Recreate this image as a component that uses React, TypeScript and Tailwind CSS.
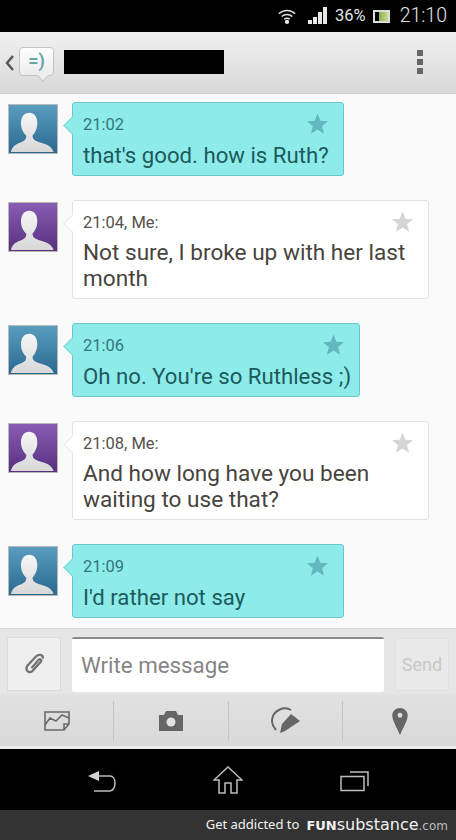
const font = { fontFamily: 'Roboto, "Noto Sans", sans-serif' };

const Avatar = ({ purple }: { purple?: boolean }) => (
  <div
    className={`relative w-[50px] h-[50px] shrink-0 overflow-hidden border border-[#b8b8b8] ${
      purple ? 'bg-gradient-to-b from-[#8a5cb4] to-[#57307f]' : 'bg-gradient-to-b from-[#5a9cc0] to-[#2a6a90]'
    }`}
  >
    <svg viewBox="0 0 50 50" className="absolute inset-0 w-full h-full">
      <defs>
        <linearGradient id="sil" x1="0" y1="0" x2="0" y2="1">
          <stop offset="0" stopColor="#f6f6f6" />
          <stop offset="1" stopColor="#d8d8d8" />
        </linearGradient>
      </defs>
      <path
        d="M2 49c1-5 4-8 10-10 4-1.500 6-3 6-7-3-3-5.500-7-5.500-13C12.500 12 16 8 21 8s8.500 4 8.500 11c0 6-2.500 10-5 13 0 4 3 5.500 8 7 7 2 12 4 14 10z"
        fill="url(#sil)"
      />
    </svg>
  </div>
);

const Star = ({ color, className }: { color: string; className: string }) => (
  <svg viewBox="0 0 24 24" className={`absolute w-[23px] h-[23px] ${className}`}>
    <path d="M12 1.500l3 7.500 8 .6-6.200 5 2 8L12 18.300 5.200 22.600l2-8L1 9.600 9 9z" fill={color} />
  </svg>
);

type Msg = { time: string; lines: string; me?: boolean; w: string };

const messages: Msg[] = [
  { time: '21:02', lines: "that's good. how is Ruth?", w: 'w-[272px]' },
  { time: '21:04, Me:', lines: 'Not sure, I broke up with her last month', me: true, w: 'w-[357px]' },
  { time: '21:06', lines: "Oh no. You're so Ruthless ;)", w: 'w-[288px]' },
  { time: '21:08, Me:', lines: 'And how long have you been waiting to use that?', me: true, w: 'w-[357px]' },
  { time: '21:09', lines: "I'd rather not say", w: 'w-[272px]' },
];

const Bubble = ({ m }: { m: Msg }) => (
  <div className="flex items-start pl-2">
    <div className="pt-[2px]">
      <Avatar purple={m.me} />
    </div>
    <div
      className={`relative ml-[14px] ${m.w} min-h-[74px] rounded-[3px] border pl-[10px] pt-[10px] pb-[6px] ${
        m.me ? 'bg-white border-[#e2e2e2] text-[#47443e]' : 'bg-[#8decea] border-[#6cc8c8] text-[#1d5a5c]'
      }`}
    >
      <div
        className={`absolute left-[-7px] top-[16px] w-[13px] h-[13px] rotate-45 border-l border-b ${
          m.me ? 'bg-white border-[#e6e6e6]' : 'bg-[#8decea] border-[#7cd8d8]'
        }`}
      />
      <Star color={m.me ? '#d4d6d4' : '#62b8bc'} className="top-[9px] right-[14px]" />
      <div className={`relative text-[16.5px] leading-[24px] ${m.me ? 'text-[#55524c]' : 'text-[#33777a]'}`}>{m.time}</div>
      <div className={`relative leading-[26px] mt-[5px] ${m.me ? 'text-[22.6px]' : 'text-[22.2px]'}`}>{m.lines}</div>
    </div>
  </div>
);

export default function App() {
  return (
    <div className="w-[456px] h-[840px] flex flex-col overflow-hidden bg-black" style={font}>
      {/* status bar */}
      <div className="h-[32px] shrink-0 bg-black flex items-center justify-end pr-[9px] text-[#e4e4e4]">
        <svg viewBox="0 0 20 18" className="w-[18px] h-[17px] mr-[12px]" fill="none" stroke="#e4e4e4" strokeWidth="1.600">
          <path d="M1 6c5-5 13-5 18 0M4 9c3.500-3 8.500-3 12 0M7 12c2-1.500 4-1.500 6 0" />
          <circle cx="10" cy="15" r="2.400" fill="#e4e4e4" stroke="none" />
        </svg>
        <svg viewBox="0 0 20 18" className="w-[20px] h-[18px] mr-[7px]" fill="#e8e8e8">
          <rect x="0" y="13" width="4" height="4" />
          <rect x="5" y="10" width="4" height="7" />
          <rect x="10" y="5" width="4" height="12" />
          <rect x="15" y="0" width="4" height="17" />
        </svg>
        <span className="text-[16.5px] leading-none mr-[7px]">36%</span>
        <div className="w-[17px] h-[13px] border-2 border-[#ddd] bg-black mr-[10px] flex justify-end">
          <div className="w-[9px] h-full bg-gradient-to-r from-[#8fb04a] to-[#c8dc8c]" />
        </div>
        <span className="text-[19.5px] leading-none font-light">21:10</span>
      </div>

      {/* action bar */}
      <div className="h-[62px] shrink-0 bg-gradient-to-b from-[#f0f0f0] to-[#d9d9d9] border-b border-[#cfcfcf] flex items-center pl-[5px] pr-[33px]">
        <svg viewBox="0 0 10 16" className="w-[10px] h-[16px] mr-[4px]" fill="none" stroke="#555" strokeWidth="2.400">
          <path d="M8 1L2 8l6 7" />
        </svg>
        <div className="relative w-[35px] h-[29px] mb-[3px] rounded-[4px] bg-gradient-to-b from-white to-[#ececec] border border-[#c4c4c4] flex items-center justify-center text-[18px] font-bold text-[#6aa5ac] leading-none">
          =)
          <div className="absolute right-[6px] bottom-[-5px] w-[8px] h-[8px] rotate-45 bg-[#eeeeee] border-r border-b border-[#c4c4c4]" />
        </div>
        <div className="w-[160px] h-[24px] bg-black ml-[10px] mb-[1px]" />
        <div className="ml-auto flex flex-col gap-[3px] mb-[2px]">
          <div className="w-[6px] h-[6px] bg-[#666]" />
          <div className="w-[6px] h-[6px] bg-[#666]" />
          <div className="w-[6px] h-[6px] bg-[#666]" />
        </div>
      </div>

      {/* messages */}
      <div className="flex-1 min-h-0 overflow-hidden bg-[#fafafa] flex flex-col gap-[24px] pt-[8px]">
        {messages.map((m) => (
          <Bubble key={m.time} m={m} />
        ))}
      </div>

      {/* input row */}
      <div className="h-[66px] shrink-0 bg-[#e6e6e6] border-t border-[#d8d8d8] flex items-center pt-[5px] pl-[7px] gap-[11px]">
        <div className="w-[54px] h-[54px] bg-[#efefef] border border-[#dadada] flex items-center justify-center">
          <svg viewBox="0 0 24 24" className="w-[24px] h-[24px]" fill="none" stroke="#737373" strokeWidth="2.300" strokeLinecap="round">
            <path d="M10 15.500l6.500-7.500c1.500-1.500 3.500-.5 2.500 1.500L10.500 19c-2.500 2.500-6.500.5-6-3 .2-1.200.7-2 1.500-3L14 4.500c2.500-2.500 6.500-2 7 1" />
          </svg>
        </div>
        <div className="w-[312px] h-[55px] bg-white border-t-2 border-[#8a8a8a] rounded-[2px] flex items-center pl-[9px] pt-[2px] text-[22.3px] text-[#858585]">
          Write message
        </div>
        <div className="w-[54px] h-[53px] bg-[#e9e9e9] border border-[#e0e0e0] flex items-center justify-center text-[18px] text-[#c8c8c8]">
          Send
        </div>
      </div>

      {/* attachments */}
      <div className="h-[55px] shrink-0 bg-gradient-to-b from-[#e2e2e2] to-[#d8d8d8] border-b-[3px] border-[#ececec] flex items-center pt-[2px]">
        <div className="w-[114px] h-[40px] border-r border-[#c4c4c4] flex items-center justify-center">
          <svg viewBox="0 0 26 20" className="w-[26px] h-[20px]" fill="none" stroke="#6a6a6a" strokeWidth="1.600">
            <path d="M1 1h24v12l-5 6H1zM1 14l5-7 6 3 6-6 7 3M25 13h-5v6" />
          </svg>
        </div>
        <div className="w-[115px] h-[40px] border-r border-[#c4c4c4] flex items-center justify-center">
          <svg viewBox="0 0 24 20" className="w-[24px] h-[20px]">
            <path d="M0 4h5l2-4h10l2 4h5v16H0z" fill="#666" />
            <circle cx="12" cy="11" r="4.500" fill="#e2e2e2" />
          </svg>
        </div>
        <div className="w-[114px] h-[40px] border-r border-[#c4c4c4] flex items-center justify-center">
          <svg viewBox="0 0 30 28" className="w-[30px] h-[28px]">
            <path d="M20 3C13-1 2 3 1 13c-.3 4 1.500 7 4 10" fill="none" stroke="#666" strokeWidth="2" />
            <path d="M20 7l9 7-15 10-5 2 2-9z" fill="#666" />
          </svg>
        </div>
        <div className="flex-1 h-[40px] flex items-center justify-center">
          <svg viewBox="0 0 16 28" className="w-[16px] h-[27px]">
            <path fillRule="evenodd" d="M8 0c4.500 0 8 3.300 8 7.800C16 13 11 21 8 28 5 21 0 13 0 7.800 0 3.300 3.500 0 8 0zm0 5a2.500 2.500 0 100 5 2.500 2.500 0 000-5z" fill="#666" />
          </svg>
        </div>
      </div>

      {/* nav bar */}
      <div className="h-[61px] shrink-0 bg-black flex items-center">
        <div className="w-[203px] flex justify-center mt-[3px]">
          <svg viewBox="0 0 30 26" className="w-[30px] h-[26px]" fill="none" stroke="#bdbdbd" strokeWidth="1.500">
            <path d="M12 8h11c3 0 5 3 5 7s-2 8-5 8H7" />
            <path d="M1 8l11-5v10z" fill="#d4d4d4" stroke="none" />
          </svg>
        </div>
        <div className="w-[50px] flex justify-center">
          <svg viewBox="0 0 30 28" className="w-[30px] h-[28px]" fill="none" stroke="#bdbdbd" strokeWidth="1.500">
            <path d="M1 14L15 1l14 13h-5v13h-6V17h-6v10H6V14z" />
          </svg>
        </div>
        <div className="ml-[87px] mt-[3px]">
          <svg viewBox="0 0 30 22" className="w-[30px] h-[22px]" fill="none" stroke="#bdbdbd" strokeWidth="1.500">
            <rect x="1" y="6.500" width="23" height="14" />
            <path d="M10 2h18v14" />
          </svg>
        </div>
      </div>

      {/* footer */}
      <div className="h-[30px] shrink-0 bg-[#333333] flex items-center justify-end pr-[8px] text-[#f2f2f2]">
        <span className="text-[13px]" style={{ fontFamily: '"Noto Sans", sans-serif' }}>Get addicted to</span>
        <span className="ml-[7px] leading-none" style={{ fontFamily: '"DejaVu Sans", sans-serif' }}>
          <span className="font-bold text-[13px]">FUN</span>
          <span className="text-[16px]">substance</span>
          <span className="text-[12px] text-[#bdbdbd]">.com</span>
        </span>
      </div>
    </div>
  );
}
